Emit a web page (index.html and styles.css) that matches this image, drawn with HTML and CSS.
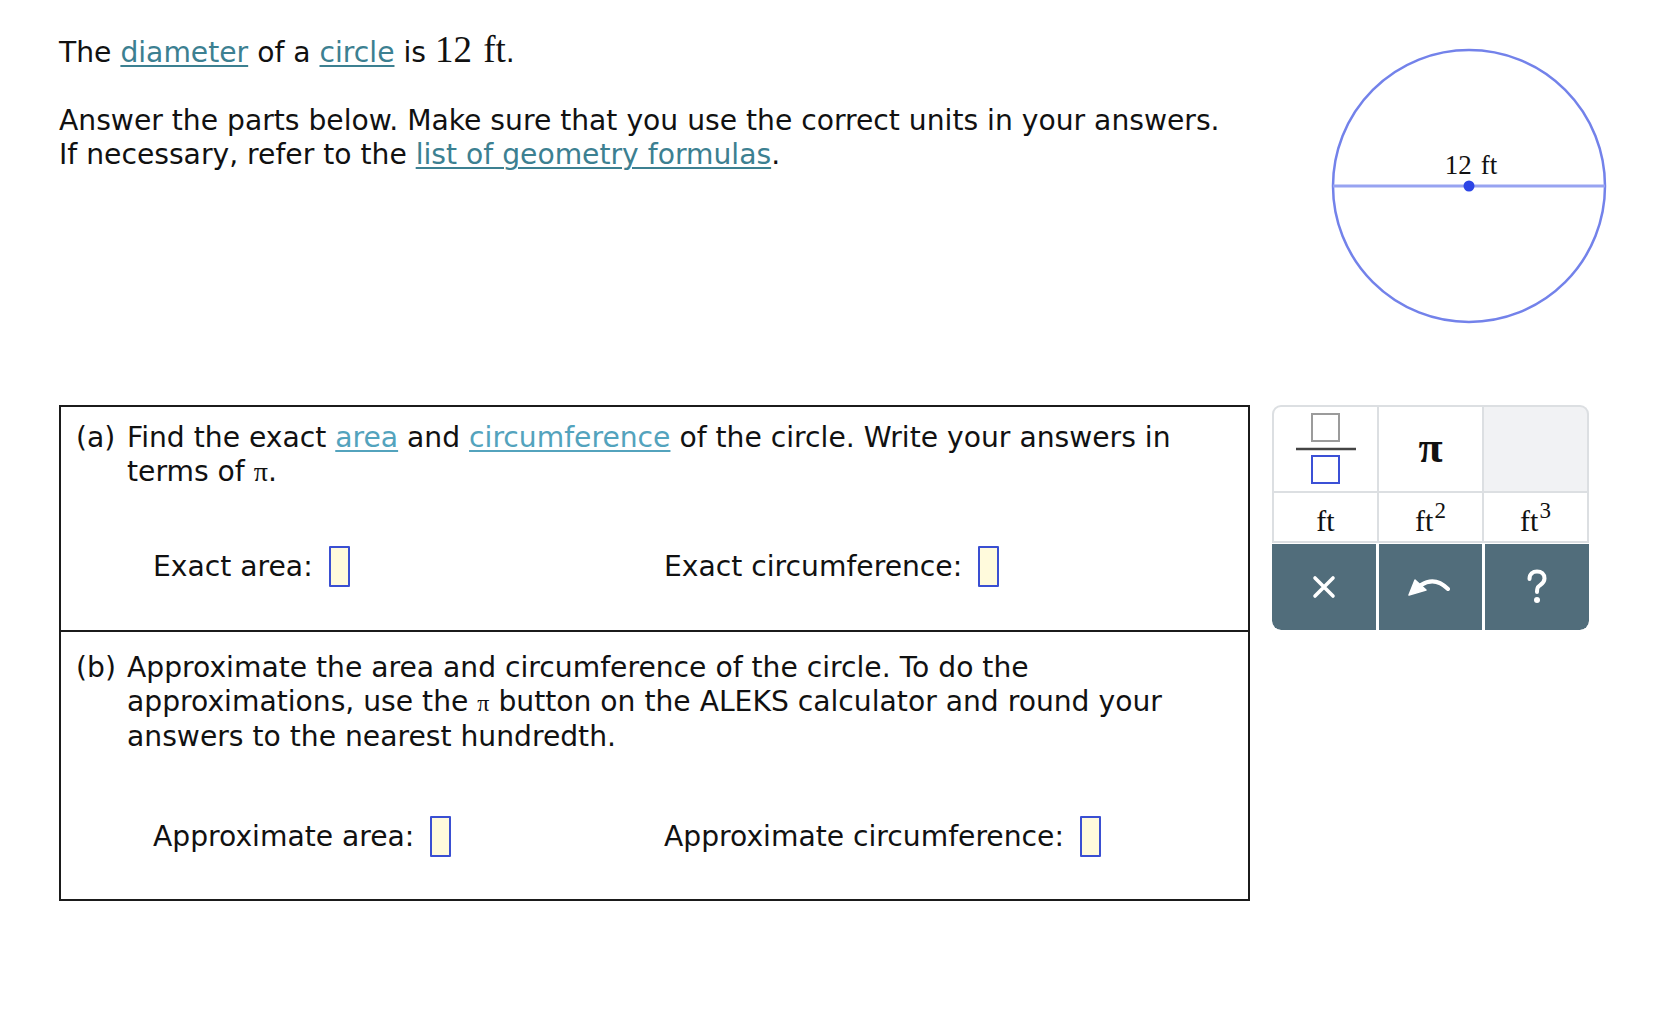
FILE: index.html
```html
<!DOCTYPE html>
<html lang="en">
<head>
<meta charset="utf-8">
<title>Circle</title>
<link rel="stylesheet" href="styles.css">
</head>
<body>
<div class="page">
  <div class="top">
    <div class="intro">
      <p class="line">The <a class="link" href="#">diameter</a> of a <a class="link" href="#">circle</a> is <span class="math-lg">12 ft</span>.</p>
      <p class="para">Answer the parts below. Make sure that you use the correct units in your answers.<br>If necessary, refer to the <a class="link" href="#">list of geometry formulas</a>.</p>
    </div>
    <svg class="figure" width="280" height="280" viewBox="0 0 280 280">
      <circle cx="140" cy="140" r="136" fill="none" stroke="#7382ea" stroke-width="2.5"/>
      <line x1="4" y1="140" x2="276" y2="140" stroke="#97a3f1" stroke-width="3"/>
      <circle cx="140" cy="140" r="5.5" fill="#2c45e6"/>
      <text x="142" y="128" text-anchor="middle" class="fig-label">12&#8202; ft</text>
    </svg>
  </div>

  <div class="work">
    <div class="qbox">
      <div class="part part-a">
        <div class="prompt">
          <span class="plabel">(a)</span>
          <span class="ptext">Find the exact <a class="link2" href="#">area</a> and <a class="link2" href="#">circumference</a> of the circle. Write your answers in terms of <span class="pi">&pi;</span>.</span>
        </div>
        <div class="answers">
          <div class="ans">Exact area: <span class="input"></span></div>
          <div class="ans">Exact circumference: <span class="input"></span></div>
        </div>
      </div>
      <div class="part part-b">
        <div class="prompt">
          <span class="plabel">(b)</span>
          <span class="ptext">Approximate the area and circumference of the circle. To do the approximations, use the <span class="pi pi-sm">&pi;</span> button on the ALEKS calculator and round your answers to the nearest hundredth.</span>
        </div>
        <div class="answers">
          <div class="ans">Approximate area: <span class="input"></span></div>
          <div class="ans">Approximate circumference: <span class="input"></span></div>
        </div>
      </div>
    </div>

    <div class="keypad">
      <div class="key">
        <svg width="64" height="76" viewBox="0 0 64 76">
          <rect x="18" y="3" width="27" height="27" fill="none" stroke="#9b9b9b" stroke-width="2"/>
          <line x1="2" y1="38" x2="62" y2="38" stroke="#444" stroke-width="2.5"/>
          <rect x="18" y="45" width="27" height="27" fill="none" stroke="#3b50d6" stroke-width="2"/>
        </svg>
      </div>
      <div class="key"><span class="kpi">&pi;</span></div>
      <div class="key key-empty"></div>
      <div class="key key-unit"><span class="unit">ft</span></div>
      <div class="key key-unit"><span class="unit">ft<sup>2</sup></span></div>
      <div class="key key-unit"><span class="unit">ft<sup>3</sup></span></div>
      <div class="actions">
        <div class="act act-left">
          <svg width="24" height="24" viewBox="0 0 24 24">
            <path d="M3 3 L21 21 M21 3 L3 21" stroke="#fff" stroke-width="3.6" stroke-linecap="round"/>
          </svg>
        </div>
        <div class="act">
          <svg width="46" height="26" viewBox="0 0 46 26">
            <path d="M14 11 Q28 2 41 15" fill="none" stroke="#fff" stroke-width="4" stroke-linecap="round"/>
            <path d="M2 21 L8 6 L19 16 Z" fill="#fff" stroke="#fff" stroke-width="1.5" stroke-linejoin="round"/>
          </svg>
        </div>
        <div class="act act-right">
          <svg width="24" height="36" viewBox="0 0 24 36">
            <path d="M4.5 10 C4.5 4.5 8 2.5 12 2.5 C16.5 2.5 19.5 5 19.5 9.5 C19.5 14 16 15.5 13.5 17.5 C12 18.7 12 20 12 23" fill="none" stroke="#fff" stroke-width="4" stroke-linecap="round"/>
            <circle cx="12" cy="31" r="3" fill="#fff"/>
          </svg>
        </div>
      </div>
    </div>
  </div>
</div>
</body>
</html>
```

FILE: styles.css
```css
* { box-sizing: border-box; }

html, body {
  margin: 0;
  padding: 0;
  background: #fff;
}

body {
  font-family: "DejaVu Sans", Verdana, sans-serif;
  font-size: 28.2px;
  line-height: 34px;
  color: #111;
}

.page {
  padding-left: 59px;
  width: 1660px;
}

.top {
  display: flex;
  align-items: flex-start;
  height: 405px;
}

.intro {
  padding-top: 33px;
}

.intro p {
  margin: 0;
}

.para {
  margin-top: 34px !important;
}

.math-lg {
  font-family: "Liberation Serif", "Times New Roman", serif;
  font-size: 37px;
  line-height: 34px;
  word-spacing: 2px;
}

.link {
  color: #3c8091;
  text-decoration: underline;
  text-decoration-thickness: 1.5px;
  text-underline-offset: 3px;
}

.link2 {
  color: #53a3bd;
  text-decoration: underline;
  text-decoration-thickness: 1.5px;
  text-underline-offset: 3px;
}

.figure {
  margin-left: auto;
  margin-right: 51px;
  margin-top: 46px;
  flex: none;
}

.fig-label {
  font-family: "Liberation Serif", "Times New Roman", serif;
  font-size: 27px;
  fill: #111;
}

.work {
  display: flex;
  align-items: flex-start;
  gap: 22px;
}

.qbox {
  width: 1191px;
  border: 2px solid #1b1b1b;
  flex: none;
}

.part {
  padding: 0 15px 0 15px;
}

.part-a {
  padding-top: 14px;
  padding-bottom: 43px;
}

.part-b {
  border-top: 2px solid #1b1b1b;
  padding-top: 19px;
  padding-bottom: 42px;
}

.prompt {
  display: flex;
}

.plabel {
  flex: none;
  width: 51px;
}

.ptext {
  flex: 1;
}

.pi {
  font-family: "Liberation Serif", "Times New Roman", serif;
  font-size: 28px;
}

.pi-sm {
  font-size: 24px;
}

.answers {
  display: grid;
  grid-template-columns: 511px 1fr;
  padding-left: 77px;
  margin-top: 57px;
}

.part-b .answers {
  margin-top: 62px;
}

.ans {
  display: flex;
  align-items: center;
  height: 41px;
  white-space: pre;
}

.input {
  display: inline-block;
  width: 21px;
  height: 41px;
  margin-left: 7px;
  border: 2px solid #3a4fd2;
  background: #fffadc;
  border-radius: 1px;
}

.keypad {
  width: 317px;
  flex: none;
  display: grid;
  grid-template-columns: repeat(3, 1fr);
  grid-template-rows: 84px 48px 87px;
  gap: 2px;
  padding: 2px 2px 0;
  background: #dcdfe2;
  border-radius: 9px;
  overflow: hidden;
}

.key {
  background: #fff;
  display: flex;
  align-items: center;
  justify-content: center;
  font-family: "Liberation Serif", "Times New Roman", serif;
  color: #111;
}

.key:first-child {
  border-top-left-radius: 7px;
}

.key-empty {
  background: #f1f2f4;
  border-top-right-radius: 7px;
}

.kpi {
  font-weight: bold;
  font-size: 44px;
  line-height: 1;
  margin-top: -2px;
}

.key-unit {
  font-size: 30px;
  line-height: 1;
  padding-top: 8px;
}

.unit {
  display: inline-block;
}

.unit sup {
  font-size: 23px;
  line-height: 0;
  vertical-align: 13px;
  margin-left: 1px;
}

.actions {
  grid-column: 1 / -1;
  margin: 0 -2px;
  display: grid;
  grid-template-columns: 1fr 1fr 1fr;
  gap: 3px;
  background: #fff;
  padding-top: 1px;
}

.act {
  background: #516d7b;
  display: flex;
  align-items: center;
  justify-content: center;
}

.act-left {
  border-bottom-left-radius: 9px;
}

.act-right {
  border-bottom-right-radius: 9px;
}
```
